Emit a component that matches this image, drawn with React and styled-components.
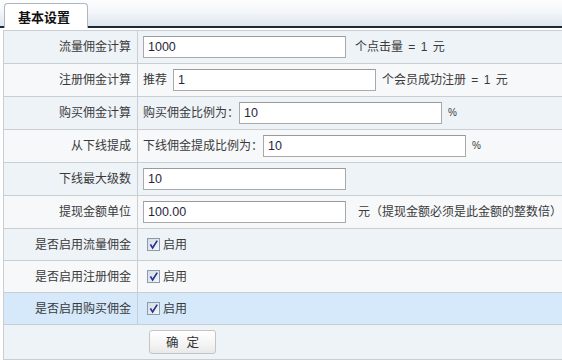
import styled, { createGlobalStyle } from 'styled-components'

const GlobalStyle = createGlobalStyle`
   html, body {
      margin: 0;
      padding: 0;
      background: #ffffff;
      overflow: hidden;
   }
   body {
      font-family: "Liberation Sans", "Noto Sans CJK SC", sans-serif;
      font-size: 12px;
      color: #333333;
   }
`

const Page = styled.div`
   width: 562px;
   height: 360px;
   overflow: hidden;
`

const TabBar = styled.div`
   display: flex;
   align-items: flex-end;
   height: 26px;
   padding-left: 4px;
   background: linear-gradient(180deg, #fcfdfe 0%, #f4f7fa 45%, #dce5ee 100%);
   border-bottom: 2px solid #1c2a38;
`

const Tab = styled.div`
   position: relative;
   z-index: 1;
   box-sizing: border-box;
   height: 25px;
   margin-bottom: -2px;
   padding: 4px 17px 0 13px;
   background: #ffffff;
   border: 1px solid #aeb7c0;
   border-bottom: none;
   border-radius: 4px 4px 0 0;
   font-family: "Noto Sans CJK SC", sans-serif;
   font-size: 13px;
   font-weight: bold;
   line-height: 18px;
   color: #111111;
`

const Table = styled.table`
   margin: 2px 0 0 3px;
   width: 600px;
   border-collapse: collapse;
   border-top: 1px solid #c9ced3;
   border-left: 1px solid #c9ced3;
`

const Row = styled.tr`
   height: ${({ $h }) => $h}px;
   background: ${({ $bg }) => $bg};
   border-bottom: 1px solid #c9ced3;
`

const Label = styled.td`
   box-sizing: border-box;
   width: 134px;
   padding: 0 6px 0 0;
   border-right: 1px solid #c9ced3;
   text-align: right;
   vertical-align: middle;
   line-height: 16px;
   white-space: nowrap;
   color: #3a3a3a;
`

const Field = styled.td`
   padding: 0 0 0 5px;
   vertical-align: middle;
   line-height: 16px;
   white-space: nowrap;
   color: #3a3a3a;
`

const Line = styled.div`
   display: flex;
   align-items: center;
`

const Input = styled.input`
   box-sizing: border-box;
   width: 203px;
   height: 22px;
   margin: 0;
   padding: 0 4px;
   border: 1px solid #a9a9a9;
   border-top-color: #9a9a9a;
   background: #ffffff;
   font-family: "Liberation Sans", "Noto Sans CJK SC", sans-serif;
   font-size: 12.5px;
   color: #2a1f3d;
   outline: none;
`

const Prefix = styled.span`
   margin-right: ${({ $gap }) => $gap}px;
`

const Suffix = styled.span`
   margin-left: ${({ $gap }) => $gap}px;
   font-size: ${({ $small }) => ($small ? '10px' : '12px')};
   word-spacing: 2px;
`

const Check = styled.label`
   display: flex;
   align-items: center;
   gap: 3px;
   padding-left: 4px;
`

const CheckBox = styled.svg`
   display: block;
   width: 13px;
   height: 13px;
`

const SubmitCell = styled.td`
   padding: 0 0 0 145px;
   vertical-align: middle;
`

const Button = styled.button`
   box-sizing: border-box;
   width: 67px;
   height: 24px;
   border: 1px solid #c4c4c4;
   border-radius: 3px;
   background: linear-gradient(180deg, #ffffff 0%, #f4f4f4 60%, #e9e9e9 100%);
   font-family: "Noto Sans CJK SC", sans-serif;
   font-size: 12.5px;
   word-spacing: 5px;
   color: #333333;
   line-height: 20px;
   padding: 0;
`

const DARK = '#eef3f8'
const LIGHT = '#f6f8fa'
const HOVER = '#d5e9fb'

const Checked = () => (
   <CheckBox viewBox="0 0 13 13">
      <defs>
         <linearGradient id="cb" x1="0" y1="0" x2="1" y2="1">
            <stop offset="0" stopColor="#d3dbe4" />
            <stop offset="1" stopColor="#f5f7f9" />
         </linearGradient>
      </defs>
      <rect x="0.5" y="0.5" width="12" height="12" fill="url(#cb)" stroke="#8a9bb0" />
      <path d="M3.4 6.4 L5.6 10 L10.2 2.6" fill="none" stroke="#26338f" strokeWidth="1.7" />
   </CheckBox>
)

const switches = ['是否启用流量佣金', '是否启用注册佣金', '是否启用购买佣金']

export default function App() {
   return (
      <Page>
         <GlobalStyle />
         <TabBar>
            <Tab>基本设置</Tab>
         </TabBar>
         <Table>
            <tbody>
               <Row $h={33} $bg={DARK}>
                  <Label>流量佣金计算</Label>
                  <Field>
                     <Line>
                        <Input defaultValue="1000" />
                        <Suffix $gap={9}>个点击量 = 1 元</Suffix>
                     </Line>
                  </Field>
               </Row>
               <Row $h={33} $bg={LIGHT}>
                  <Label>注册佣金计算</Label>
                  <Field>
                     <Line>
                        <Prefix $gap={6}>推荐</Prefix>
                        <Input defaultValue="1" />
                        <Suffix $gap={6}>个会员成功注册 = 1 元</Suffix>
                     </Line>
                  </Field>
               </Row>
               <Row $h={33} $bg={DARK}>
                  <Label>购买佣金计算</Label>
                  <Field>
                     <Line>
                        <Prefix $gap={0}>购买佣金比例为：</Prefix>
                        <Input defaultValue="10" />
                        <Suffix $gap={6} $small>%</Suffix>
                     </Line>
                  </Field>
               </Row>
               <Row $h={33} $bg={LIGHT}>
                  <Label>从下线提成</Label>
                  <Field>
                     <Line>
                        <Prefix $gap={0}>下线佣金提成比例为：</Prefix>
                        <Input defaultValue="10" />
                        <Suffix $gap={6} $small>%</Suffix>
                     </Line>
                  </Field>
               </Row>
               <Row $h={33} $bg={DARK}>
                  <Label>下线最大级数</Label>
                  <Field>
                     <Line>
                        <Input defaultValue="10" />
                     </Line>
                  </Field>
               </Row>
               <Row $h={33} $bg={LIGHT}>
                  <Label>提现金额单位</Label>
                  <Field>
                     <Line>
                        <Input defaultValue="100.00" />
                        <Suffix $gap={12}>元（提现金额必须是此金额的整数倍）</Suffix>
                     </Line>
                  </Field>
               </Row>
               {switches.map((label, idx) => (
                  <Row key={label} $h={32} $bg={idx === 2 ? HOVER : idx % 2 === 0 ? DARK : LIGHT}>
                     <Label>{label}</Label>
                     <Field>
                        <Check>
                           <Checked />
                           <span>启用</span>
                        </Check>
                     </Field>
                  </Row>
               ))}
               <Row $h={35} $bg={DARK}>
                  <SubmitCell colSpan={2}>
                     <Button type="button">确 定</Button>
                  </SubmitCell>
               </Row>
            </tbody>
         </Table>
      </Page>
   )
}
